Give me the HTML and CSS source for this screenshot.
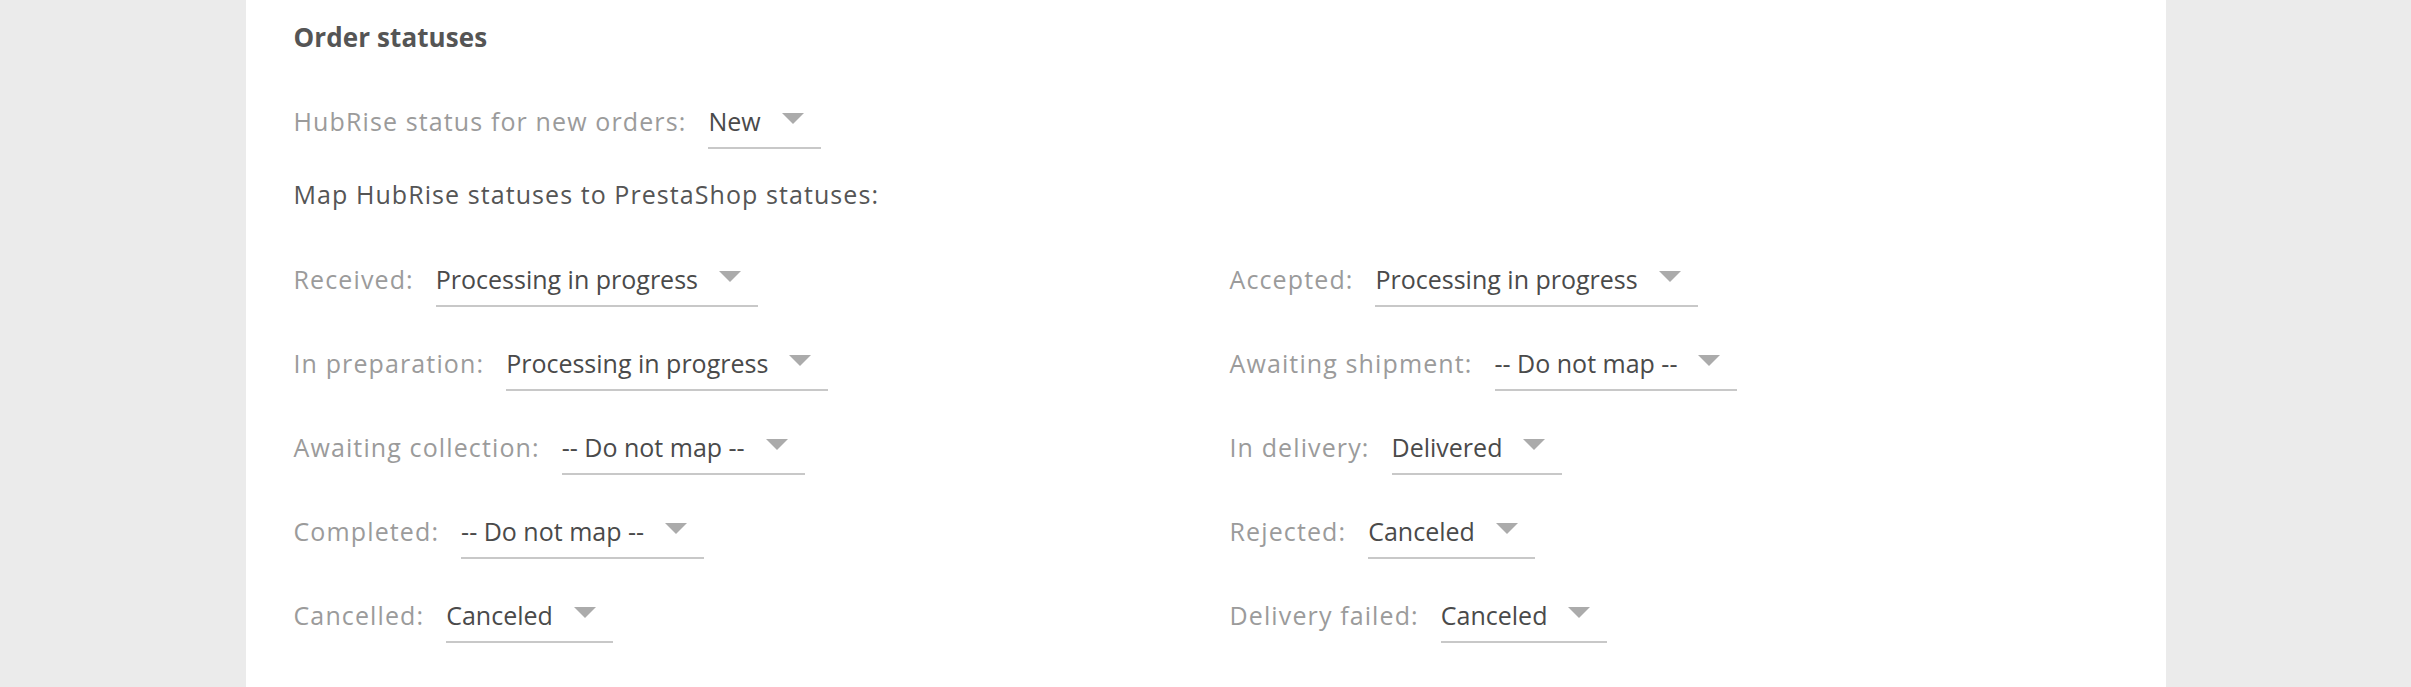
FILE: index.html
```html
<!DOCTYPE html>
<html lang="en">
<head>
<meta charset="utf-8">
<title>Order statuses</title>
<link rel="stylesheet" href="styles.css">
</head>
<body>
<main class="panel">
  <h2 class="heading">Order statuses</h2>

  <div class="field field-new">
    <span class="label">HubRise status for new orders:</span>
    <span class="select"><span class="value">New</span><span class="caret"></span></span>
  </div>

  <p class="intro">Map HubRise statuses to PrestaShop statuses:</p>

  <div class="grid">
    <div class="field">
      <span class="label">Received:</span>
      <span class="select"><span class="value">Processing in progress</span><span class="caret"></span></span>
    </div>
    <div class="field">
      <span class="label">Accepted:</span>
      <span class="select"><span class="value">Processing in progress</span><span class="caret"></span></span>
    </div>
    <div class="field">
      <span class="label">In preparation:</span>
      <span class="select"><span class="value">Processing in progress</span><span class="caret"></span></span>
    </div>
    <div class="field">
      <span class="label">Awaiting shipment:</span>
      <span class="select"><span class="value">-- Do not map --</span><span class="caret"></span></span>
    </div>
    <div class="field">
      <span class="label">Awaiting collection:</span>
      <span class="select"><span class="value">-- Do not map --</span><span class="caret"></span></span>
    </div>
    <div class="field">
      <span class="label">In delivery:</span>
      <span class="select"><span class="value">Delivered</span><span class="caret"></span></span>
    </div>
    <div class="field">
      <span class="label">Completed:</span>
      <span class="select"><span class="value">-- Do not map --</span><span class="caret"></span></span>
    </div>
    <div class="field">
      <span class="label">Rejected:</span>
      <span class="select"><span class="value">Canceled</span><span class="caret"></span></span>
    </div>
    <div class="field">
      <span class="label">Cancelled:</span>
      <span class="select"><span class="value">Canceled</span><span class="caret"></span></span>
    </div>
    <div class="field">
      <span class="label">Delivery failed:</span>
      <span class="select"><span class="value">Canceled</span><span class="caret"></span></span>
    </div>
  </div>
</main>
</body>
</html>
```
FILE: styles.css
```css
* {
  box-sizing: border-box;
}

html, body {
  margin: 0;
  padding: 0;
}

body {
  background: #ebebeb;
  font-family: "Open Sans", "Noto Sans", sans-serif;
  font-size: 25px;
  line-height: 34px;
  color: #555555;
}

.panel {
  width: 1920px;
  min-height: 687px;
  margin: 0 auto;
  background: #ffffff;
  padding: 20px 48px 40px 48px;
}

.heading {
  margin: 0;
  font-size: 26px;
  line-height: 34px;
  font-weight: 700;
  letter-spacing: 0.1px;
  color: #555555;
}

.field {
  display: flex;
  align-items: baseline;
  gap: 22px;
}

.field-new {
  margin-top: 50px;
}

.intro {
  margin: 28px 0 0 0;
  letter-spacing: 1.07px;
  color: #555555;
}

.label {
  color: #9b9b9b;
  letter-spacing: 1.12px;
}

.select {
  display: inline-flex;
  align-items: center;
  padding: 0 17px 9px 0;
  border-bottom: 2px solid #c8c8c8;
  color: #4a4a4a;
  letter-spacing: 0;
}

.caret {
  width: 0;
  height: 0;
  margin-left: 21px;
  margin-top: -6px;
  border-left: 11px solid transparent;
  border-right: 11px solid transparent;
  border-top: 11px solid #ababab;
}

.grid {
  display: grid;
  grid-template-columns: 936px 1fr;
  row-gap: 39px;
  margin-top: 51px;
}
```
